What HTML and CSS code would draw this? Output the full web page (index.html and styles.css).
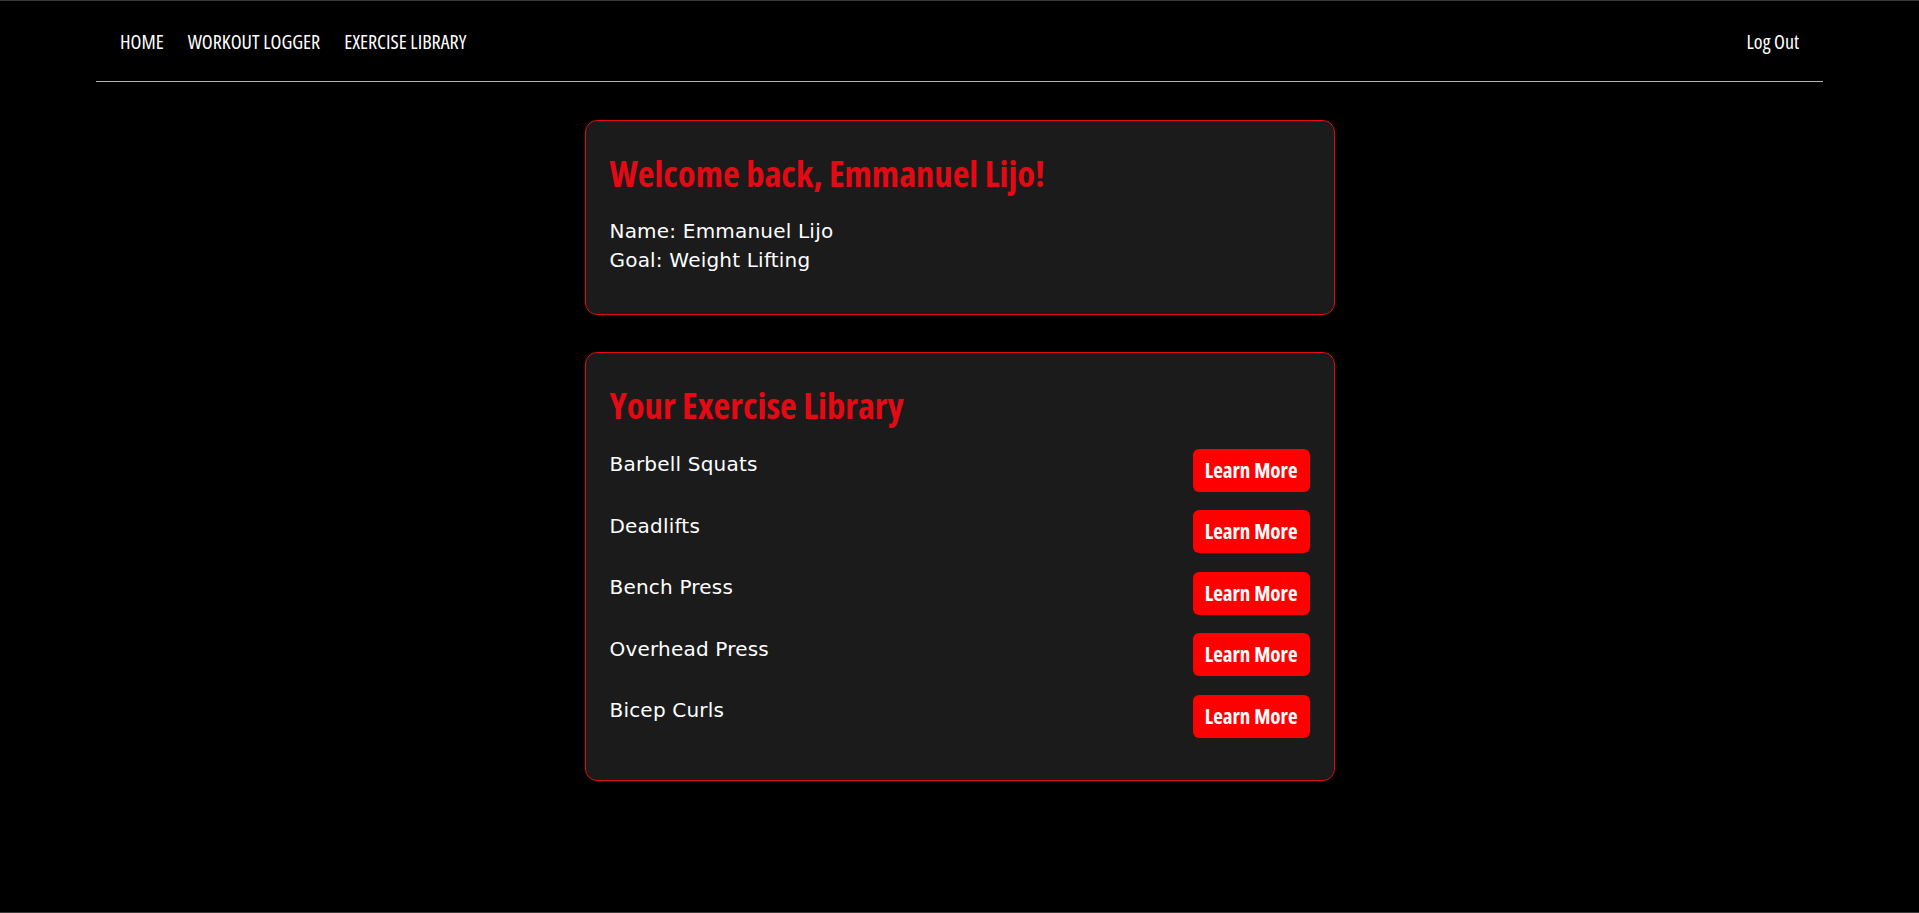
FILE: index.html
```html
<!DOCTYPE html>
<html lang="en">
<head>
  <meta charset="UTF-8" />
  <meta name="viewport" content="width=device-width, initial-scale=1.0"/>
  <title>Dashboard</title>
  <link rel="stylesheet" href="styles.css">
</head>
<body>

  <nav class="topnav">
    <ul class="nav-links">
      <li><a href="#">HOME</a></li>
      <li><a href="#">WORKOUT LOGGER</a></li>
      <li><a href="#">EXERCISE LIBRARY</a></li>
    </ul>
    <a href="#" class="logout">Log Out</a>
  </nav>

  <main>
    <section class="card">
      <h2>Welcome back, Emmanuel Lijo!</h2>
      <div class="profile">
        <p>Name: Emmanuel Lijo</p>
        <p>Goal: Weight Lifting</p>
      </div>
    </section>

    <section class="card">
      <h2>Your Exercise Library</h2>
      <ul class="exercises">
        <li><span>Barbell Squats</span><button class="btn">Learn More</button></li>
        <li><span>Deadlifts</span><button class="btn">Learn More</button></li>
        <li><span>Bench Press</span><button class="btn">Learn More</button></li>
        <li><span>Overhead Press</span><button class="btn">Learn More</button></li>
        <li><span>Bicep Curls</span><button class="btn">Learn More</button></li>
      </ul>
    </section>
  </main>

</body>
</html>
```

FILE: styles.css
```css
html {
  background: #000;
}
body {
  margin: 0;
  min-height: 100vh;
  box-sizing: border-box;
  border-top: 1px solid #3a3b34;
  border-bottom: 1px solid #3a3a3a;
  background: #000;
  color: #fff;
  font-family: "DejaVu Sans", sans-serif;
}
.topnav {
  width: 90%;
  margin: 0 auto;
  padding: 30.5px 24px 29.5px;
  box-sizing: border-box;
  display: flex;
  justify-content: space-between;
  align-items: flex-start;
  border-bottom: 1px solid #b5b5b5;
  font-family: "Open Sans", sans-serif;
  font-stretch: 75%;
  font-size: 20px;
  line-height: 20px;
}
.nav-links {
  list-style: none;
  margin: 0;
  padding: 0;
  display: flex;
  gap: 24px;
}
.topnav a {
  color: #fff;
  text-decoration: none;
}
main {
  padding: 38px 0;
}
.card {
  max-width: 750px;
  box-sizing: border-box;
  margin: 0 auto 37px;
  padding: 24px;
  background: #1b1b1b;
  border: 1px solid #e50914;
  border-radius: 12px;
}
.card h2 {
  margin: 6.5px 0 23.5px;
  color: #e50914;
  font-family: "Open Sans", sans-serif;
  font-stretch: 75%;
  font-size: 36.5px;
  line-height: 42px;
  font-weight: bold;
}
.profile {
  margin-bottom: 15.6px;
}
.profile p {
  margin: 0;
  font-size: 20px;
  line-height: 28.7px;
  letter-spacing: 0.2px;
}
.exercises {
  list-style: none;
  margin: 0;
  padding: 0;
}
.exercises li {
  display: flex;
  justify-content: space-between;
  align-items: flex-start;
  height: 43px;
  margin-bottom: 18.4px;
}
.exercises span {
  padding-top: 1.4px;
  font-size: 20px;
  line-height: 28.7px;
  letter-spacing: 0.2px;
}
.btn {
  height: 43px;
  padding: 0 12px;
  border: none;
  border-radius: 6px;
  background: #ff0000;
  color: #fff;
  font-family: "Open Sans", sans-serif;
  font-stretch: 75%;
  font-size: 21px;
  font-weight: bold;
  line-height: 43px;
  cursor: pointer;
}
```
